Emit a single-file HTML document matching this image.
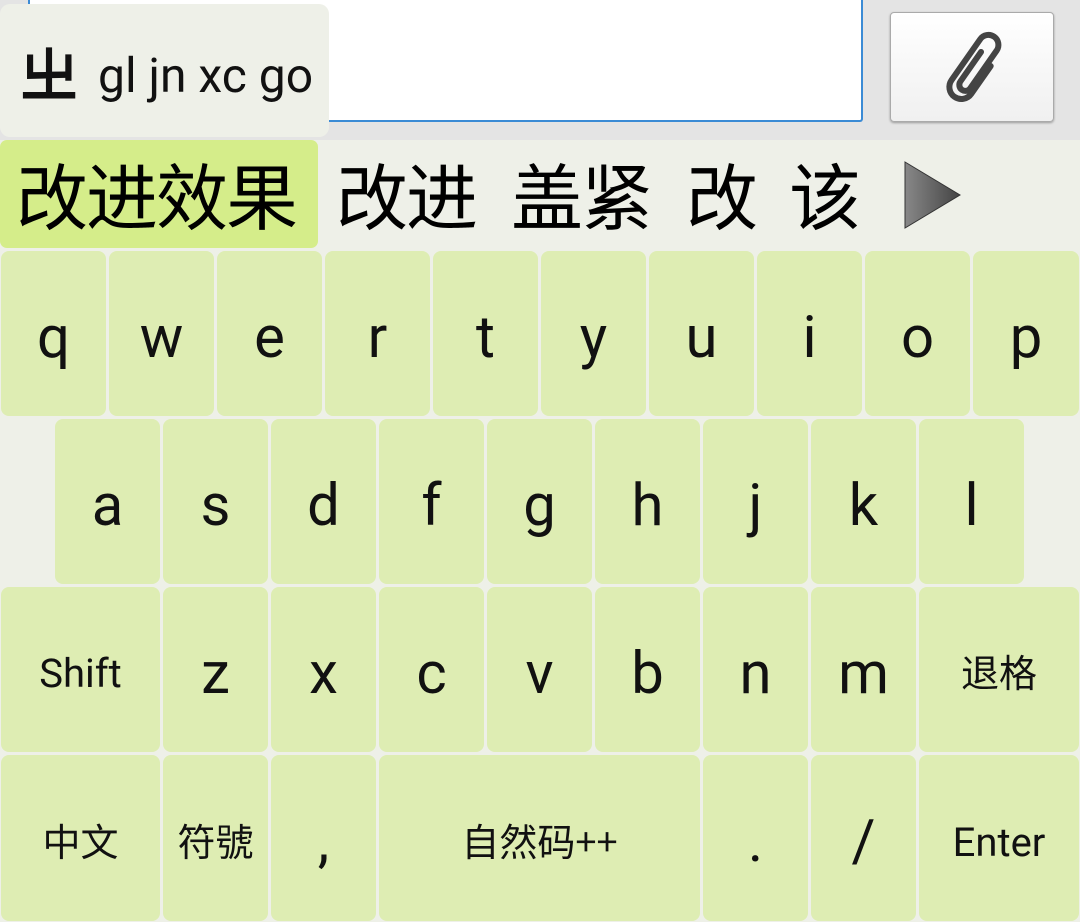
<!DOCTYPE html>
<html><head><meta charset="utf-8"><style>
*{margin:0;padding:0;box-sizing:border-box}
body{width:1080px;height:922px;background:#e4e4e4;position:relative;overflow:hidden;font-family:"Roboto","Liberation Sans","Noto Sans CJK SC",sans-serif;color:#111}
.abs{position:absolute}
#field{left:28px;top:-4px;width:835px;height:126px;background:#fff;border:2px solid #3b8bd5;border-top:none;border-radius:0 0 3px 3px}
#btn{left:890px;top:12px;width:164px;height:110px;background:linear-gradient(#fff,#f0f0f0);border:1px solid #aaa;border-radius:4px;box-shadow:0 1px 2px #999}
#comp{left:0;top:4px;width:329px;height:133px;background:#eef0e8;border-radius:10px}
#comp .z{left:20px;top:32px;font-size:58px;font-weight:bold;font-family:"Noto Sans CJK SC",sans-serif;line-height:70px}
#comp .p{left:98px;top:43px;font-size:48px;line-height:58px}
#cand{left:0;top:140px;width:1080px;height:111px;background:#eef0e8}
#hl{left:0;top:140px;width:318px;height:108px;background:#d5ed8a;border-radius:7px}
.c{top:148px;font-size:72px;line-height:90px;font-family:"Noto Sans CJK SC",sans-serif;color:#000;font-weight:normal}
#kb{left:0;top:251px;width:1080px;height:671px;background:#eef0e8}
.k{position:absolute;background:#deedb3;border-radius:8px;display:flex;align-items:center;justify-content:center;font-size:58px;color:#111;padding-top:8px}
.s{font-size:40px}
.cj{font-size:38px;font-family:"Noto Sans CJK SC",sans-serif;padding-top:2px}
</style></head><body>
<div id="field" class="abs"></div>
<div id="btn" class="abs"><svg width="164" height="110" viewBox="0 0 164 110"><g transform="translate(83,56) rotate(35) translate(-10,-40)"><path d="M6 22 V58 A6 6 0 0 0 18 58 V12 A10 10 0 0 0 -2 12 V62 A12 12 0 0 0 22 62 V28" fill="none" stroke="#444" stroke-width="6" stroke-linecap="round"/></g></svg></div>
<div id="comp" class="abs"><div class="abs z">㞢</div><div class="abs p">gl jn xc go</div></div>
<div id="cand" class="abs"></div>
<div id="hl" class="abs"></div>
<div class="abs c" style="left:16px;letter-spacing:-2px">改进效果</div>
<div class="abs c" style="left:336px;letter-spacing:-2px">改进</div>
<div class="abs c" style="left:511px;letter-spacing:-2px">盖紧</div>
<div class="abs c" style="left:686px">改</div>
<div class="abs c" style="left:789px">该</div>
<svg class="abs" style="left:903px;top:160px" width="60" height="70"><defs><linearGradient id="g" x1="0" x2="1"><stop offset="0" stop-color="#888"/><stop offset="1" stop-color="#444"/></linearGradient></defs><polygon points="2,2 57,35 2,68" fill="url(#g)" stroke="#333" stroke-width="1"/></svg>
<div id="kb" class="abs"></div>
<div class="k" style="left:1px;top:251px;width:105px;height:165px">q</div>
<div class="k" style="left:109px;top:251px;width:105px;height:165px">w</div>
<div class="k" style="left:217px;top:251px;width:105px;height:165px">e</div>
<div class="k" style="left:325px;top:251px;width:105px;height:165px">r</div>
<div class="k" style="left:433px;top:251px;width:105px;height:165px">t</div>
<div class="k" style="left:541px;top:251px;width:105px;height:165px">y</div>
<div class="k" style="left:649px;top:251px;width:105px;height:165px">u</div>
<div class="k" style="left:757px;top:251px;width:105px;height:165px">i</div>
<div class="k" style="left:865px;top:251px;width:105px;height:165px">o</div>
<div class="k" style="left:973px;top:251px;width:106px;height:165px">p</div>
<div class="k" style="left:55px;top:419px;width:105px;height:165px">a</div>
<div class="k" style="left:163px;top:419px;width:105px;height:165px">s</div>
<div class="k" style="left:271px;top:419px;width:105px;height:165px">d</div>
<div class="k" style="left:379px;top:419px;width:105px;height:165px">f</div>
<div class="k" style="left:487px;top:419px;width:105px;height:165px">g</div>
<div class="k" style="left:595px;top:419px;width:105px;height:165px">h</div>
<div class="k" style="left:703px;top:419px;width:105px;height:165px">j</div>
<div class="k" style="left:811px;top:419px;width:105px;height:165px">k</div>
<div class="k" style="left:919px;top:419px;width:105px;height:165px">l</div>
<div class="k s" style="left:1px;top:587px;width:159px;height:165px">Shift</div>
<div class="k" style="left:163px;top:587px;width:105px;height:165px">z</div>
<div class="k" style="left:271px;top:587px;width:105px;height:165px">x</div>
<div class="k" style="left:379px;top:587px;width:105px;height:165px">c</div>
<div class="k" style="left:487px;top:587px;width:105px;height:165px">v</div>
<div class="k" style="left:595px;top:587px;width:105px;height:165px">b</div>
<div class="k" style="left:703px;top:587px;width:105px;height:165px">n</div>
<div class="k" style="left:811px;top:587px;width:105px;height:165px">m</div>
<div class="k cj" style="left:919px;top:587px;width:160px;height:165px">退格</div>
<div class="k cj" style="left:1px;top:755px;width:159px;height:166px">中文</div>
<div class="k cj" style="left:163px;top:755px;width:105px;height:166px">符號</div>
<div class="k" style="left:271px;top:755px;width:105px;height:166px">,</div>
<div class="k cj" style="left:379px;top:755px;width:321px;height:166px">自然码++</div>
<div class="k" style="left:703px;top:755px;width:105px;height:166px">.</div>
<div class="k" style="left:811px;top:755px;width:105px;height:166px">/</div>
<div class="k s" style="left:919px;top:755px;width:160px;height:166px">Enter</div>
</body></html>
